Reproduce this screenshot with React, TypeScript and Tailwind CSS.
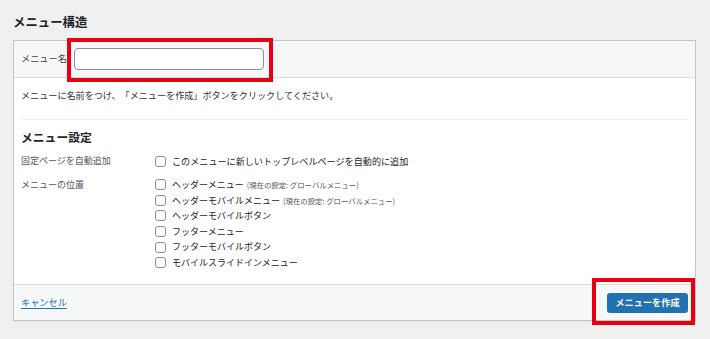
import React from 'react'

const font = { fontFamily: '"Noto Sans CJK JP", "Noto Sans", sans-serif' }

interface LocationOption {
  label: string
  note?: string
}

const locations: LocationOption[] = [
  { label: 'ヘッダーメニュー', note: '(現在の設定: グローバルメニュー)' },
  { label: 'ヘッダーモバイルメニュー', note: '(現在の設定: グローバルメニュー)' },
  { label: 'ヘッダーモバイルボタン' },
  { label: 'フッターメニュー' },
  { label: 'フッターモバイルボタン' },
  { label: 'モバイルスライドインメニュー' },
]

function Box() {
  return (
    <span className="inline-block w-[11px] h-[11px] shrink-0 rounded-[3px] border border-[#8c8f94] bg-white" />
  )
}

export default function App() {
  return (
    <div
      className="relative w-[710px] h-[339px] overflow-hidden bg-[#f0f0f1] text-[#1d2327] [text-spacing-trim:space-all]"
      style={font}
    >
      {/* Page title */}
      <div className="h-[40px] pl-[13px] pt-[14px]">
        <h2 className="m-0 text-[12.4px] leading-[17px] font-bold">メニュー構造</h2>
      </div>

      {/* Panel */}
      <div className="ml-[13px] w-[683px] h-[281px] border border-[#c3c4c7] bg-white flex flex-col shadow-[0_1px_1px_rgba(0,0,0,0.04)]">
        {/* Header */}
        <div className="h-[37px] shrink-0 bg-[#f6f7f7] border-b border-[#dcdcde] flex items-center pl-[7px]">
          <span className="text-[9.2px] text-[#3c434a] w-[53px]">メニュー名</span>
          <div className="w-[190px] h-[22px] rounded-[4px] border border-[#8c8f94] bg-white" />
        </div>

        {/* Body */}
        <div className="h-[206px] shrink-0 px-[7px]">
          <p className="m-0 pt-[10px] text-[9.1px] leading-[14px] text-[#2c3338]">
            メニューに名前をつけ、「メニューを作成」ボタンをクリックしてください。
          </p>
          <div className="mt-[17px] border-t border-[#f0f0f1]" />
          <h3 className="m-0 mt-[9px] text-[11.8px] leading-[16px] font-bold">メニュー設定</h3>

          <div className="mt-[9px] flex">
            <div className="w-[134px] text-[9px] leading-[14px] text-[#50575e]">固定ページを自動追加</div>
            <div className="flex items-center gap-[6px] text-[9.1px] leading-[14px]">
              <Box />
              <span>このメニューに新しいトップレベルページを自動的に追加</span>
            </div>
          </div>

          <div className="mt-[9px] flex">
            <div className="w-[134px] text-[9px] leading-[15.6px] text-[#50575e]">メニューの位置</div>
            <div className="flex flex-col">
              {locations.map((loc) => (
                <div key={loc.label} className="flex items-center gap-[6px] h-[15.6px] text-[9px]">
                  <Box />
                  <span>
                    {loc.label}
                    {loc.note && (
                      <span className="ml-[3px] text-[7.4px] text-[#50575e]">{loc.note}</span>
                    )}
                  </span>
                </div>
              ))}
            </div>
          </div>
        </div>

        {/* Footer */}
        <div className="flex-1 bg-[#f6f7f7] border-t border-[#dcdcde] flex items-center justify-between pl-[7px] pr-[7px]">
          <a href="#" className="text-[9.2px] text-[#2271b1] underline underline-offset-2">
            キャンセル
          </a>
          <button className="w-[81px] h-[20px] rounded-[3px] bg-[#2271b1] text-white text-[9.2px] font-bold">
            メニューを作成
          </button>
        </div>
      </div>

      {/* Annotation boxes */}
      <div className="absolute left-[67px] top-[38px] w-[206px] h-[44px] border-[4px] border-[#e60012]" />
      <div className="absolute left-[592px] top-[278px] w-[103px] h-[47px] border-[4px] border-[#e60012]" />
    </div>
  )
}
